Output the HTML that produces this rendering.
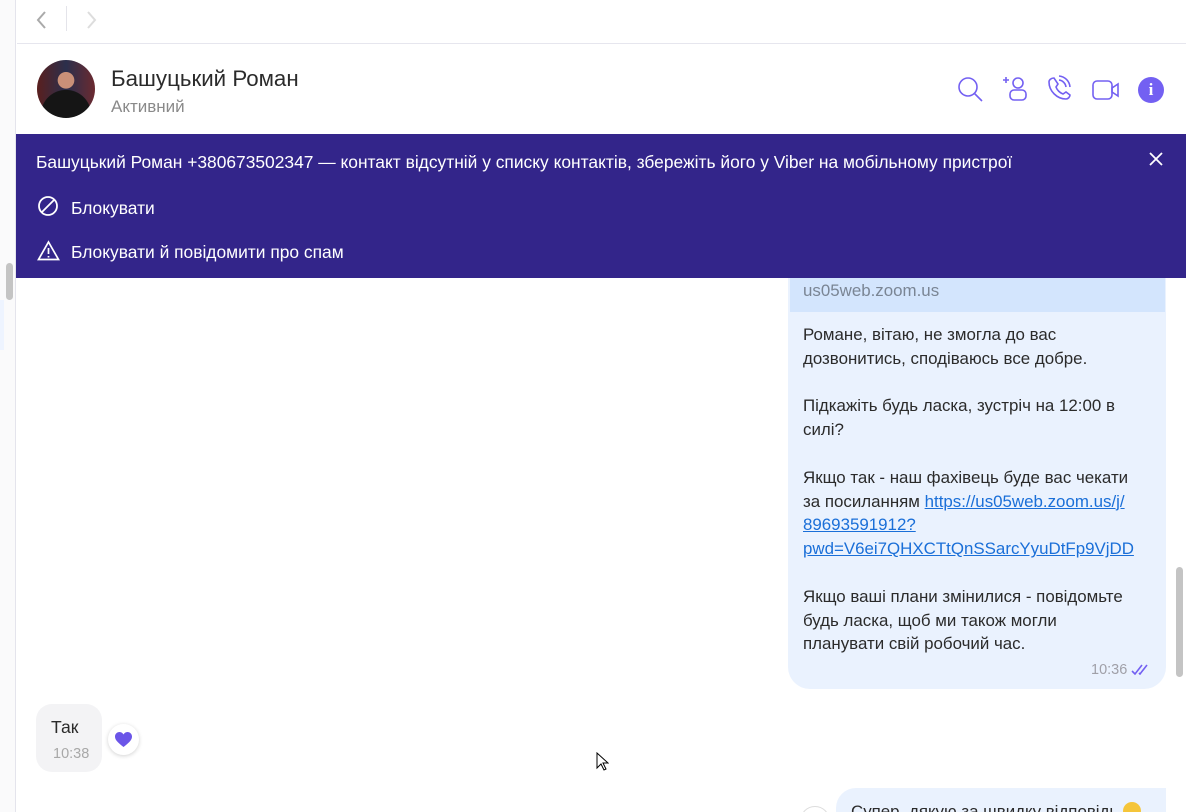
<!DOCTYPE html>
<html><head><meta charset="utf-8"><style>
*{margin:0;padding:0;box-sizing:border-box}
html,body{width:1186px;height:812px;overflow:hidden}
body{background:#fff;font-family:"Liberation Sans","DejaVu Sans",sans-serif;position:relative;color:#222}
.abs{position:absolute}
.t{font-size:16.9px;line-height:23.8px;color:#2b2b2b;white-space:nowrap}
</style></head><body>
<div class="abs" style="left:0;top:0;width:16px;height:812px;background:#fafafb;border-right:1px solid #e4e4ec"></div>
<div class="abs" style="left:6px;top:263px;width:7px;height:37px;background:#c4c4c4;border-radius:4px"></div>
<div class="abs" style="left:0;top:300px;width:4px;height:50px;background:#eef4ff"></div>
<div class="abs" style="left:17px;top:0;width:1169px;height:44px;border-bottom:1px solid #e6e6ee"></div>
<svg class="abs" style="left:34px;top:10px" width="16" height="20"><path d="M11 2 L4 10 L11 18" stroke="#aaa" stroke-width="2" fill="none"/></svg>
<div class="abs" style="left:66px;top:6px;width:1px;height:25px;background:#e4e4ea"></div>
<svg class="abs" style="left:84px;top:10px" width="16" height="20"><path d="M4 2 L11 10 L4 18" stroke="#ddd" stroke-width="2" fill="none"/></svg>
<div class="abs" style="left:37px;top:60px;width:58px;height:58px;border-radius:50%;background:radial-gradient(circle at 50% 35%,#c99078 0 17%,transparent 18%),radial-gradient(circle at 50% 95%,#151515 0 40%,transparent 41%),linear-gradient(90deg,#5a1f1e,#2b2f4c 50%,#6b2a30)"></div>
<div class="abs" style="left:111px;top:66px;font-size:22.3px;color:#2b2b2b">Башуцький Роман</div>
<div class="abs" style="left:111px;top:97px;font-size:17px;color:#8a8a8a">Активний</div>
<svg class="abs" style="left:955px;top:74px" width="190" height="32" fill="none" stroke="#7360f2" stroke-width="1.6">
<circle cx="13" cy="13" r="9"/><path d="M19.5 19.5 L27 27"/>
<path d="M48 6h6M51 3v6"/><circle cx="63" cy="9" r="5"/><rect x="55" y="16" width="16" height="10" rx="4"/>
<path d="M99 4c-3 0-5 2-5 4 0 9 8 17 17 17 2 0 4-2 4-4l-4-3-3 2c-3-1-6-4-7-7l2-3z"/><path d="M104 6a8 8 0 0 1 7 7M104 2a12 12 0 0 1 11 11"/>
<rect x="138" y="7" width="19" height="18" rx="4"/><path d="M157 14l6-4v12l-6-4z"/>
</svg>
<div class="abs" style="left:1138px;top:77px;width:26px;height:26px;border-radius:50%;background:#7360f2;color:#fff;font-weight:bold;font-size:17px;text-align:center;line-height:26px;font-family:'Liberation Serif',serif">i</div>
<div class="abs" style="left:16px;top:134px;width:1170px;height:144px;background:#33258a"></div>
<div class="abs" style="left:36px;top:152px;font-size:17.4px;color:#fff;white-space:nowrap">Башуцький Роман +380673502347 — контакт відсутній у списку контактів, збережіть його у Viber на мобільному пристрої</div>
<svg class="abs" style="left:1148px;top:151px" width="16" height="16"><path d="M2 2L14 14M14 2L2 14" stroke="#fff" stroke-width="1.8"/></svg>
<svg class="abs" style="left:37px;top:195px" width="22" height="22" fill="none" stroke="#fff" stroke-width="1.8"><circle cx="11" cy="11" r="9"/><path d="M5 17L17 5"/></svg>
<div class="abs" style="left:71px;top:198px;font-size:17.4px;color:#fff">Блокувати</div>
<svg class="abs" style="left:37px;top:240px" width="23" height="21" fill="none" stroke="#fff" stroke-width="1.7"><path d="M11.5 2L21.5 19.5H1.5Z"/><path d="M11.5 8v6M11.5 16v1.5"/></svg>
<div class="abs" style="left:71px;top:242px;font-size:17.4px;color:#fff">Блокувати й повідомити про спам</div>
<div class="abs" style="left:788px;top:278px;width:378px;height:411px;background:#eaf2fe;border-radius:0 0 22px 22px"></div>
<div class="abs" style="left:790px;top:278px;width:375px;height:34px;background:#d3e5fd"></div>
<div class="abs" style="left:803px;top:281px;font-size:16.9px;color:#7a8594">us05web.zoom.us</div>
<div class="abs t" style="left:803px;top:323px">Романе, вітаю, не змогла до вас<br>дозвонитись, сподіваюсь все добре.<br><br>Підкажіть будь ласка, зустріч на 12:00 в<br>силі?<br><br>Якщо так - наш фахівець буде вас чекати<br>за посиланням <span style="color:#1a6fd8;text-decoration:underline">https://us05web.zoom.us/j/<br>89693591912?<br>pwd=V6ei7QHXCTtQnSSarcYyuDtFp9VjDD</span><br><br>Якщо ваші плани змінилися - повідомьте<br>будь ласка, щоб ми також могли<br>планувати свій робочий час.</div>
<div class="abs" style="left:1091px;top:662px;font-size:14.5px;color:#a0a0a8">10:36</div>
<svg class="abs" style="left:1131px;top:663px" width="22" height="12" fill="none" stroke="#7360f2" stroke-width="1.6"><path d="M1 8l3 3 7-9M8 10l1 1 7-9"/></svg>
<div class="abs" style="left:1176px;top:567px;width:7px;height:110px;background:#c4c4c4;border-radius:4px"></div>
<div class="abs" style="left:36px;top:704px;width:66px;height:68px;background:#f3f3f5;border-radius:16px"></div>
<div class="abs" style="left:51px;top:717px;font-size:17.6px;color:#2b2b2b">Так</div>
<div class="abs" style="left:53px;top:746px;font-size:14.5px;color:#a8a8a8">10:38</div>
<div class="abs" style="left:108px;top:724px;width:31px;height:31px;border-radius:50%;background:#fff;box-shadow:0 1px 4px rgba(0,0,0,.18)"></div>
<svg class="abs" style="left:114px;top:731px" width="19" height="17"><path d="M9.5 16C3 11 1 8.5 1 5.5 1 3 3 1 5.5 1 7.5 1 9 2.5 9.5 3.5 10 2.5 11.5 1 13.5 1 16 1 18 3 18 5.5 18 8.5 16 11 9.5 16Z" fill="#6b55e8"/></svg>
<svg class="abs" style="left:595px;top:752px" width="14" height="20"><path d="M2 1v15l4-4 3 6 2-1-3-6h5z" fill="#fff" stroke="#000" stroke-width="1"/></svg>
<div class="abs" style="left:800px;top:806px;width:30px;height:30px;border-radius:50%;border:1px solid #ddd"></div>
<div class="abs" style="left:836px;top:788px;width:330px;height:40px;background:#eaf2fe;border-radius:20px 0 0 0"></div>
<div class="abs t" style="left:851px;top:800px">Супер, дякую за швидку відповідь <span style="display:inline-block;width:18px;height:18px;border-radius:50%;background:#f5c53a;vertical-align:-3px"></span></div>
</body></html>
